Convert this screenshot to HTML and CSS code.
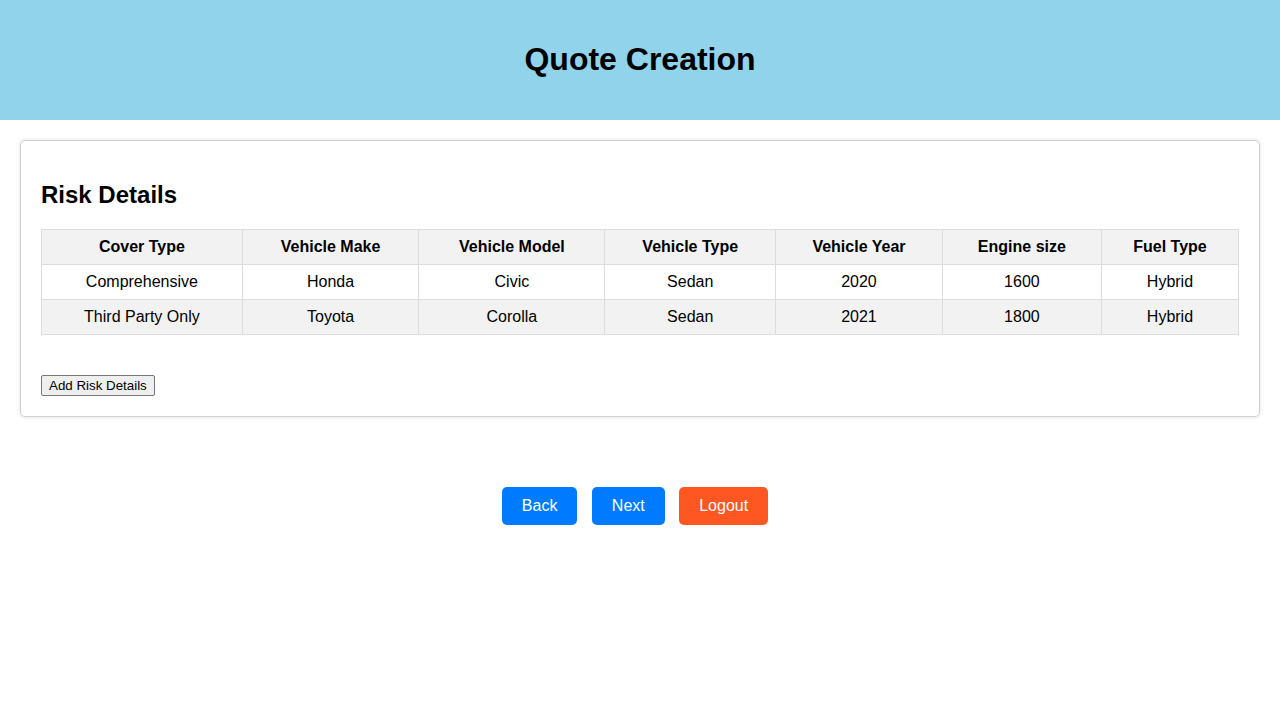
FILE: index.html
```html
<!DOCTYPE html>
<html lang="en">
<head>
<meta charset="utf-8">
<title>Quote Creation</title>
<link rel="stylesheet" href="styles.css">
</head>
<body>
<header class="page-header">
  <h1>Quote Creation</h1>
</header>
<main>
  <section class="card">
    <h2>Risk Details</h2>
    <table class="risk-table">
      <thead>
        <tr>
          <th>Cover Type</th>
          <th>Vehicle Make</th>
          <th>Vehicle Model</th>
          <th>Vehicle Type</th>
          <th>Vehicle Year</th>
          <th>Engine size</th>
          <th>Fuel Type</th>
        </tr>
      </thead>
      <tbody>
        <tr>
          <td>Comprehensive</td>
          <td>Honda</td>
          <td>Civic</td>
          <td>Sedan</td>
          <td>2020</td>
          <td>1600</td>
          <td>Hybrid</td>
        </tr>
        <tr>
          <td>Third Party Only</td>
          <td>Toyota</td>
          <td>Corolla</td>
          <td>Sedan</td>
          <td>2021</td>
          <td>1800</td>
          <td>Hybrid</td>
        </tr>
      </tbody>
    </table>
    <button class="add-btn" type="button">Add Risk Details</button>
  </section>
  <div class="actions">
    <button class="btn btn-blue" type="button">Back</button>
    <button class="btn btn-blue" type="button">Next</button>
    <button class="btn btn-orange" type="button">Logout</button>
  </div>
</main>
</body>
</html>
```
FILE: styles.css
```css
html, body {
  margin: 0;
  padding: 0;
  background: #ffffff;
  font-family: "Liberation Sans", Arial, sans-serif;
  color: #000;
}

.page-header {
  background: #90d3eb;
  padding: 20px;
  text-align: center;
}

.page-header h1 {
  margin: 21px 0 22px;
  font-size: 32px;
  line-height: 37px;
  font-weight: bold;
}

.card {
  margin: 20px;
  padding: 20px;
  border: 1px solid #cfcfcf;
  border-radius: 5px;
  box-shadow: 0 0 4px rgba(0, 0, 0, 0.12);
}

.card h2 {
  margin: 20px 0 20px;
  font-size: 24px;
  line-height: 28px;
  font-weight: bold;
}

.risk-table {
  width: 100%;
  border-collapse: collapse;
  margin: 0 0 40px;
  font-size: 16px;
}

.risk-table th,
.risk-table td {
  border: 1px solid #dddddd;
  padding: 8px;
  text-align: center;
  line-height: 18px;
}

.risk-table th {
  background: #f2f2f2;
  font-weight: bold;
}

.risk-table tbody tr:nth-child(even) td {
  background: #f2f2f2;
}

.add-btn {
  display: block;
  font-family: "Liberation Sans", Arial, sans-serif;
  font-size: 13.333px;
  line-height: 15px;
  padding: 2px 7px 2px;
  border: 1px solid #767676;
  border-radius: 2px;
  background: #efefef;
  color: #000;
}

.actions {
  margin-top: 70px;
  text-align: center;
}

.btn {
  font-family: "Liberation Sans", Arial, sans-serif;
  font-size: 16px;
  line-height: 18px;
  padding: 10px 20px;
  margin: 0 10px 0 0;
  border: none;
  border-radius: 5px;
  color: #ffffff;
}

.btn-blue {
  background: #007bff;
}

.btn-orange {
  background: #ff5722;
}
```
